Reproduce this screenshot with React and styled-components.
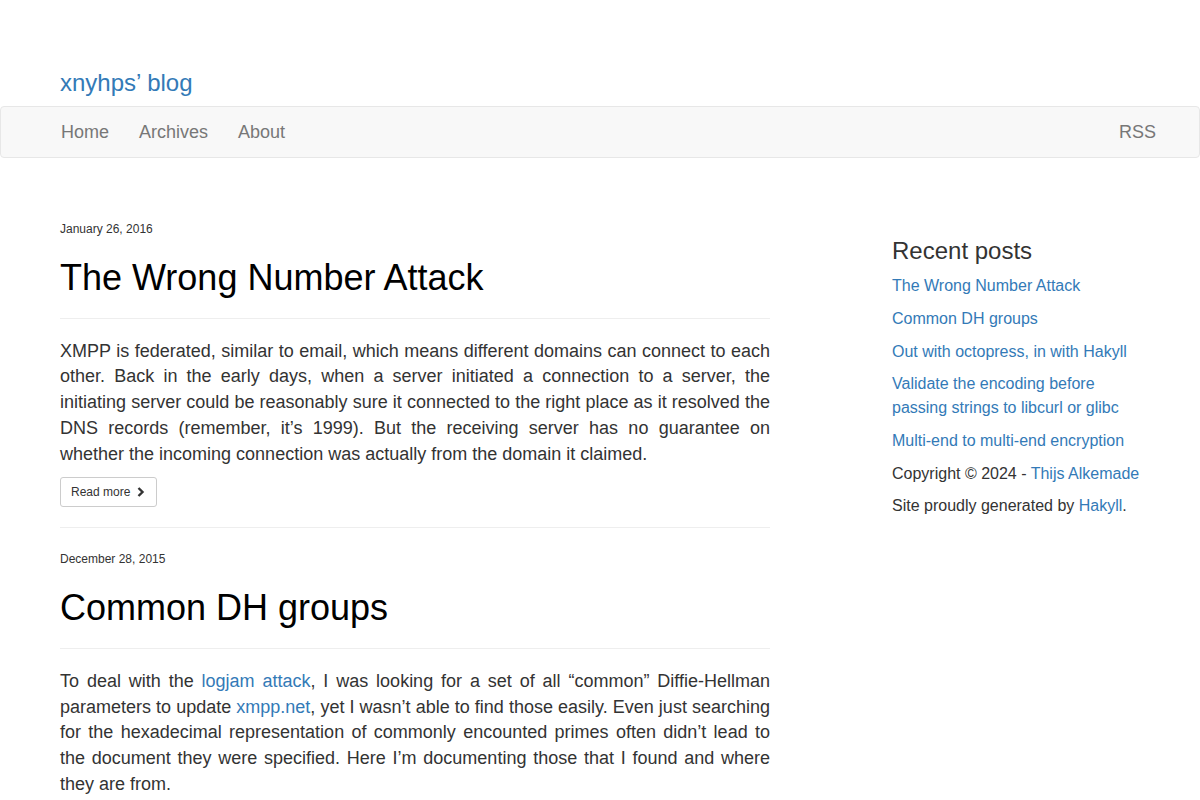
import React from 'react'
import styled, { createGlobalStyle } from 'styled-components'

const GlobalStyle = createGlobalStyle`
  html, body {
    margin: 0;
    padding: 0;
    background: #fff;
  }

  body {
    font-family: 'Liberation Sans', Arial, Helvetica, sans-serif;
    font-size: 18px;
    line-height: 1.42857;
    color: #333;
  }

  a {
    color: #337ab7;
    text-decoration: none;
  }
`

const Header = styled.header`
  padding: 66px 60px 0;
`

const BlogTitle = styled.a`
  display: inline-block;
  font-size: 24px;
  line-height: 34px;
`

const Navbar = styled.nav`
  display: flex;
  align-items: center;
  justify-content: space-between;
  height: 50px;
  margin: 6px 0 20px;
  padding: 0 28px 0 45px;
  background: #f8f8f8;
  border: 1px solid #e7e7e7;
  border-radius: 4px;
`

const NavGroup = styled.div`
  display: flex;
`

const NavLink = styled.a`
  padding: 0 15px;
  color: #777;
  font-size: 18px;
  line-height: 50px;
`

const Layout = styled.div`
  display: grid;
  grid-template-columns: 710px 248px;
  column-gap: 122px;
  padding: 0 60px;
`

const Main = styled.main`
  padding-top: 43px;
`

const Post = styled.article``

const PostDate = styled.div`
  font-size: 12px;
  line-height: 17px;
  color: #333;
  padding-top: ${({ first }) => (first ? '0' : '3px')};
`

const PostTitle = styled.h1`
  margin: 20px 0 0;
  font-size: 36px;
  font-weight: 400;
  line-height: 1.1;
  color: #000;
`

const Rule = styled.hr`
  margin: 20px 0;
  border: 0;
  border-top: 1px solid #eee;
`

const Excerpt = styled.p`
  margin: 2px 0 10px;
  font-size: 18px;
  line-height: 25.75px;
  text-align: justify;
`

const ReadMore = styled.a`
  display: inline-flex;
  align-items: center;
  gap: 6px;
  height: 30px;
  box-sizing: border-box;
  padding: 0 10px;
  font-size: 12px;
  color: #333;
  background: #fff;
  border: 1px solid #ccc;
  border-radius: 3px;
`

const Sidebar = styled.aside`
  padding-top: 60px;
`

const SideHeading = styled.h3`
  margin: 0 0 10px;
  font-size: 24px;
  font-weight: 400;
  line-height: 1.1;
  color: #333;
`

const SideList = styled.div`
  display: flex;
  flex-direction: column;
  gap: 8.67px;
  font-size: 16px;
  line-height: 24px;
`

const SideItem = styled.div`
  color: #333;
`

const Chevron = () => (
  <svg width='10' height='10' viewBox='0 0 10 10'>
    <path d='M2.5 1 L6.5 5 L2.5 9' fill='none' stroke='#333' strokeWidth='2.4' />
  </svg>
)

const recent = [
  'The Wrong Number Attack',
  'Common DH groups',
  'Out with octopress, in with Hakyll',
  'Validate the encoding before passing strings to libcurl or glibc',
  'Multi-end to multi-end encryption'
]

export default function App () {
  return (
    <>
      <GlobalStyle />
      <Header>
        <BlogTitle href='#'>xnyhps’ blog</BlogTitle>
      </Header>
      <Navbar>
        <NavGroup>
          <NavLink href='#'>Home</NavLink>
          <NavLink href='#'>Archives</NavLink>
          <NavLink href='#'>About</NavLink>
        </NavGroup>
        <NavGroup>
          <NavLink href='#'>RSS</NavLink>
        </NavGroup>
      </Navbar>

      <Layout>
        <Main>
          <Post>
            <PostDate first>January 26, 2016</PostDate>
            <PostTitle>The Wrong Number Attack</PostTitle>
            <Rule />
            <Excerpt>
              XMPP is federated, similar to email, which means different domains can
              connect to each other. Back in the early days, when a server initiated a
              connection to a server, the initiating server could be reasonably sure it
              connected to the right place as it resolved the DNS records (remember,
              it’s 1999). But the receiving server has no guarantee on whether the
              incoming connection was actually from the domain it claimed.
            </Excerpt>
            <ReadMore href='#'>Read more <Chevron /></ReadMore>
          </Post>
          <Rule />
          <Post>
            <PostDate>December 28, 2015</PostDate>
            <PostTitle>Common DH groups</PostTitle>
            <Rule />
            <Excerpt>
              To deal with the <a href='#'>logjam attack</a>, I was looking for a set of
              all “common” Diffie-Hellman parameters to update <a href='#'>xmpp.net</a>,
              yet I wasn’t able to find those easily. Even just searching for the
              hexadecimal representation of commonly encounted primes often didn’t lead
              to the document they were specified. Here I’m documenting those that I
              found and where they are from.
            </Excerpt>
          </Post>
        </Main>

        <Sidebar>
          <SideHeading>Recent posts</SideHeading>
          <SideList>
            {recent.map(title => (
              <a key={title} href='#'>{title}</a>
            ))}
            <SideItem>
              Copyright © 2024 - <a href='#'>Thijs Alkemade</a>
            </SideItem>
            <SideItem>
              Site proudly generated by <a href='#'>Hakyll</a>.
            </SideItem>
          </SideList>
        </Sidebar>
      </Layout>
    </>
  )
}
